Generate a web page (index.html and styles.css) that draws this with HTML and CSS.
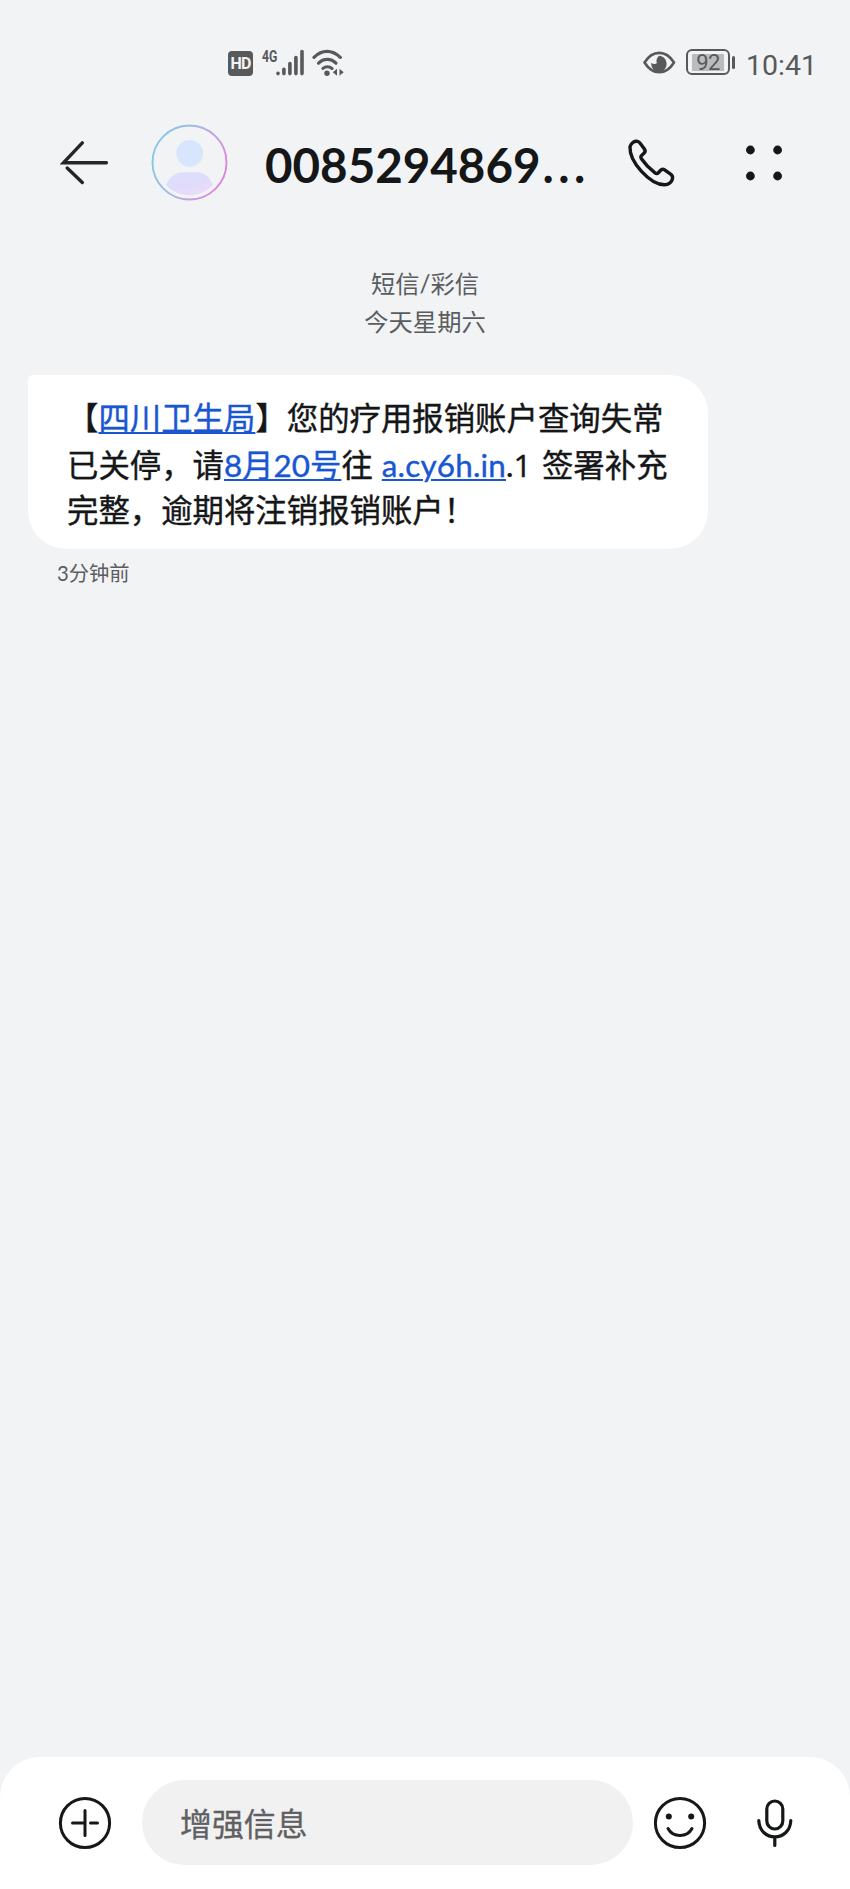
FILE: index.html
```html
<!DOCTYPE html>
<html lang="zh-CN">
<head>
  <meta charset="UTF-8">
  <title>短信</title>
  <meta name="viewport" content="width=device-width, initial-scale=1.0">
  <link rel="stylesheet" href="styles.css">
</head>
<body>

<div class="status-bar">
  <span class="hd">HD</span>
  <span class="network">4G</span>
  <svg class="signal" width="28" height="27" viewBox="0 0 28 27" stroke="#58595b" stroke-width="3.6" stroke-linecap="round">
    <path d="M2 24.2v.4M7.900 20.200v4.400M13.900 14.500v10.100M19.900 8.500v16.100M26 2.500v22.100"/>
  </svg>
  <svg class="wifi" width="32" height="28" viewBox="0 0 32 28" fill="none" stroke="#58595b" stroke-width="3.2" stroke-linecap="round">
    <path d="M2 8.400C10 .4 20 .4 28.300 8.400"/>
    <path d="M6.500 14.200c5-5.200 12.500-5.200 17.500 0"/>
    <path d="M11 19.400c2.600-2.200 6.300-2.200 9 0"/>
    <circle cx="15" cy="24.200" r="2.700" fill="#58595b" stroke="none"/>
    <path d="M25 19.700v7l-4.200-3.500zM27.500 19.700v7l4.200-3.500z" fill="#58595b" stroke="none"/>
  </svg>
  <svg class="eye" width="34" height="24" viewBox="0 0 34 24">
    <path d="M1.500 11.500C9.500-1.400 23-1.400 31 11.500 23 24.400 9.500 24.400 1.500 11.500z" fill="none" stroke="#58595b" stroke-width="2.600" stroke-linejoin="round"/>
    <path d="M16 4.800c4.400.2 7.600 3.600 7.600 8s-3.300 8.200-7.700 8.200-7.900-3.600-7.700-9.200c1.600 1.400 3.900 1.500 5.600.5-1-3.200.2-5.800 2.200-7.500z" fill="#58595b"/>
  </svg>
  <div class="battery"><span>92</span></div>
  <span class="battery-tip"></span>
  <span class="clock">10:41</span>
</div>

<div class="header">
  <svg class="back" width="50" height="46" viewBox="0 0 50 46" fill="none" stroke="#242526" stroke-width="3.400" stroke-linecap="round">
    <path d="M22.300 2.900L3.600 22.700h42.800"/>
    <path d="M7.200 28l15.100 14.500"/>
  </svg>
  <svg class="avatar" width="77" height="77" viewBox="0 0 77 77">
    <defs>
      <linearGradient id="ring" x1="0" y1="0.300" x2="1" y2="0.700">
        <stop offset="0" stop-color="#83c9e8"/>
        <stop offset="0.500" stop-color="#b0b1e5"/>
        <stop offset="1" stop-color="#e57fdc"/>
      </linearGradient>
      <linearGradient id="person" x1="0.200" y1="0" x2="0.800" y2="1">
        <stop offset="0" stop-color="#dadffc"/>
        <stop offset="0.500" stop-color="#e0dcfb"/>
        <stop offset="1" stop-color="#efd9fa"/>
      </linearGradient>
    </defs>
    <circle cx="38.500" cy="38.500" r="37" fill="none" stroke="url(#ring)" stroke-width="1.900"/>
    <circle cx="38.700" cy="29.300" r="13.400" fill="#d7e6fd"/>
    <path d="M15 61c3.500-8 9-12.800 17-12.800h13.500c8 0 13.500 4.800 16.500 12.800C50 74.500 27 74.500 15 61z" fill="url(#person)"/>
  </svg>
  <h1 class="number">0085294869<span class="dots">...</span></h1>
  <svg class="call" width="50" height="50" viewBox="0 0 50 50" fill="none" stroke="#161718" stroke-width="3.400" stroke-linejoin="round">
    <path d="M4 8.800C5 5 8.500 2.800 11.500 3.400c1.500.3 2.300 1.300 3.200 2.500l3.700 5c1.200 1.700.8 3.300-.7 4.700l-1.900 1.700c-1.200 1.100-1.200 2.200-.4 3.400 3.700 5.400 8.200 10 13.600 14.100 1.300 1 2.600.8 3.600-.3l1.800-2c1.200-1.300 2.700-1.600 4.200-.6l6 4.300c1.500 1.100 2.300 2.500 1.900 4.400-.6 3.200-3.600 6.200-8.200 6.200C24 46.200 3.200 24 4 8.800z"/>
  </svg>
  <svg class="more" width="38" height="38" viewBox="0 0 38 38" fill="#161718">
    <circle cx="5.400" cy="6" r="4.400"/>
    <circle cx="32.600" cy="6" r="4.400"/>
    <circle cx="5.400" cy="32" r="4.400"/>
    <circle cx="32.600" cy="32" r="4.400"/>
  </svg>
</div>

<div class="chat">
  <p class="day">短信/彩信<br>今天星期六</p>
  <p class="bubble">【<a>四川卫生局</a>】您的疗用报销账户查询失常<br>已关停，请<a>8月20号</a>往<a class="url">a.cy6h.in</a><span class="tail">.<span class="one">1</span></span>签署补充<br>完整，逾期将注销报销账户！</p>
  <p class="time">3分钟前</p>
</div>

<div class="composer">
  <svg class="add" width="54" height="54" viewBox="0 0 54 54" fill="none" stroke="#161718" stroke-width="3" stroke-linecap="round">
    <circle cx="27" cy="27" r="24.600"/>
    <path d="M27 14.500v25M14.500 27H27M32.500 27h7"/>
  </svg>
  <div class="field">增强信息</div>
  <svg class="emoji" width="54" height="54" viewBox="0 0 54 54" fill="none" stroke="#161718" stroke-width="3" stroke-linecap="round">
    <circle cx="27" cy="27" r="24.600"/>
    <path d="M15 32.500c5 9.300 19 9.300 24 0"/>
    <circle cx="15.800" cy="20.500" r="3" fill="#161718" stroke="none"/>
    <circle cx="38.200" cy="20.500" r="3" fill="#161718" stroke="none"/>
  </svg>
  <svg class="mic" width="38" height="50" viewBox="0 0 38 50" fill="none" stroke="#161718" stroke-width="3.200" stroke-linecap="round">
    <rect x="10.800" y="3" width="16" height="28" rx="8"/>
    <path d="M2.800 22.500c.8 21.800 31.200 21.800 32 0M18.800 39.500v8"/>
  </svg>
</div>

</body>
</html>
```

FILE: styles.css
```css
* {
  box-sizing: border-box;
}

body {
  margin: 0;
  height: 1889px;
  display: flex;
  flex-direction: column;
  background: #f1f3f5;
  color: #151617;
  font-family: Lato, "Noto Sans CJK SC", sans-serif;
}

svg {
  display: block;
  flex: none;
}

h1, p {
  margin: 0;
}

.status-bar {
  display: flex;
  height: 77px;
  padding: 49px 0 0 228px;
  color: #58595b;
}

.hd {
  width: 25px;
  height: 25px;
  margin-top: 2px;
  border-radius: 4px;
  background: #58595b;
  color: #f1f3f5;
  font: bold 16px/25px Roboto, sans-serif;
  letter-spacing: -0.8px;
  text-align: center;
}

.network {
  width: 23px;
  padding-left: 9px;
  font: bold 17px/15px Roboto, sans-serif;
  transform: scaleX(0.72);
  transform-origin: 9px 0;
}

.wifi {
  margin-left: 8px;
}

.eye {
  margin: 2px 0 0 299px;
}

.battery {
  width: 44px;
  height: 26px;
  margin-left: 9px;
  padding: 3px;
  border: 2px solid #58595b;
  border-radius: 6px;
}

.battery span {
  display: block;
  width: 32px;
  height: 17px;
  margin-left: 1px;
  background: #bbbcbe;
  font: 22px/18px Roboto, sans-serif;
  letter-spacing: -0.5px;
  text-align: center;
}

.battery-tip {
  width: 3px;
  height: 13px;
  margin: 7px 0 0 2px;
  border-radius: 2px;
  background: #58595b;
}

.clock {
  margin: 1px 0 0 11px;
  font: 28.500px/31px Roboto, sans-serif;
}

.header {
  display: flex;
  align-items: center;
  height: 98px;
  margin-top: 38px;
  margin-bottom: 52px;
  padding: 0 0 3px 60px;
}

.avatar {
  margin-left: 41px;
}

.number {
  flex: none;
  width: 398px;
  padding: 5px 0 0 37px;
  font-size: 47.500px;
  font-weight: bold;
  line-height: 60px;
  white-space: nowrap;
}

.dots {
  margin-left: 2px;
  letter-spacing: 4.500px;
}

.more {
  margin-left: 69px;
}

.chat {
  flex: 1;
}

.day {
  height: 110px;
  color: #5b5c5e;
  font-size: 24.300px;
  line-height: 38px;
  text-align: center;
}

.bubble {
  width: 680px;
  height: 174px;
  margin-left: 28px;
  padding: 21px 0 0 39px;
  border-radius: 5px 38px 38px 38px;
  background: #fff;
  font-size: 31.400px;
  line-height: 45.600px;
  white-space: nowrap;
  -webkit-text-stroke: 0.4px;
}

.bubble a {
  color: #1957d2;
  text-decoration: underline;
  text-decoration-thickness: 2px;
  text-underline-offset: 2px;
}

.bubble .url {
  margin-left: 9px;
  letter-spacing: 0.200px;
}

.tail {
  display: inline-block;
  width: 36px;
}

.one {
  font-family: "Open Sans", sans-serif;
  font-weight: 500;
}

.time {
  margin: 9px 0 0 57px;
  color: #5b5c5e;
  font-size: 20.300px;
  line-height: 30px;
}

.composer {
  display: flex;
  height: 132px;
  padding: 23px 0 0 58px;
  border-radius: 40px 40px 0 0;
  background: #fff;
}

.add {
  margin-top: 16px;
}

.field {
  width: 491px;
  height: 85px;
  margin-left: 30px;
  padding-left: 38px;
  border-radius: 43px;
  background: #f1f1f2;
  color: #5f6062;
  font-size: 31.900px;
  line-height: 88px;
  -webkit-text-stroke: 0.3px;
}

.emoji {
  margin: 16px 0 0 20px;
}

.mic {
  margin: 18px 0 0 49px;
}
```
